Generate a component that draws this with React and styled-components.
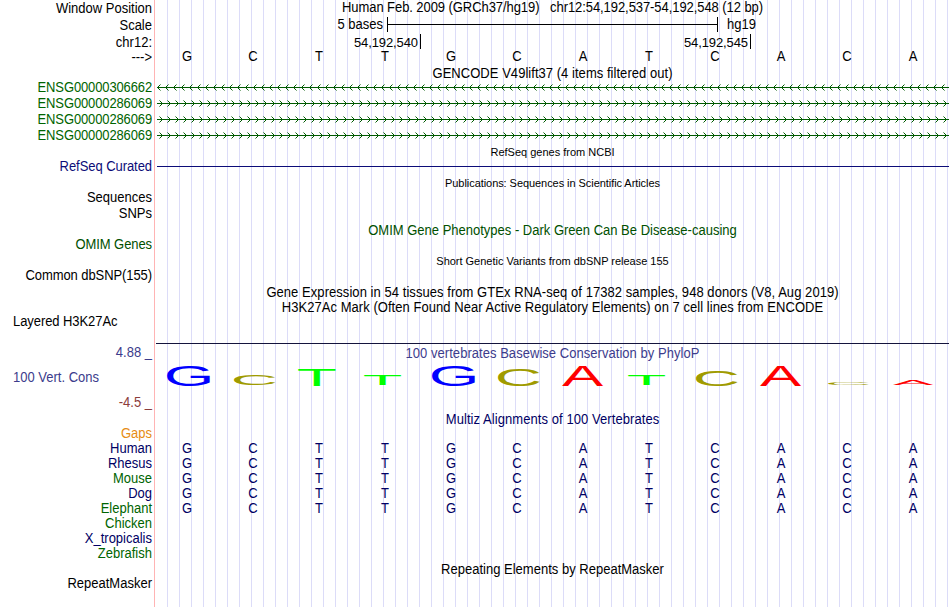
import React from "react";
import styled, { createGlobalStyle, css } from "styled-components";

const Page = createGlobalStyle`
  body { margin: 0; background: #fff; }
`;

const Browser = styled.main`
  box-sizing: border-box;
  width: 949px;
  height: 607px;
  padding-top: 1px;
  overflow: hidden;
  font: 13px/16px "Liberation Sans", Arial, sans-serif;
  color: #000;
  white-space: pre;
  background:
    linear-gradient(#ffb4b4, #ffb4b4) 154px 0 / 1px 100% no-repeat,
    repeating-linear-gradient(90deg, #dcdcf8 0 1px, transparent 1px 12px) 167px 0 / 782px 100% no-repeat;
`;

// slightly tall lettering
const tall = css`
  transform: scaleY(1.07);
  transform-origin: 0 6px;
`;

const Row = styled.div`
  display: flex;
  height: ${(p) => p.$h}px;
`;

const Label = styled.div`
  flex: none;
  box-sizing: border-box;
  width: 154px;
  height: 16px;
  margin-top: ${(p) => p.$top || 0}px;
  padding: 0 2px 0 13px;
  text-align: ${(p) => (p.$left ? "left" : "right")};
  color: ${(p) => p.$color || "#000"};
  letter-spacing: ${(p) => p.$ls || 0}px;
  ${tall}
`;

const Title = styled.div`
  flex: 1;
  height: 16px;
  margin: ${(p) => p.$top || 0}px 0 0 2px;
  text-align: center;
  font-size: ${(p) => (p.$small ? 11 : 13)}px;
  color: ${(p) => p.$color || "#000"};
  letter-spacing: ${(p) => p.$ls || 0}px;
  ${(p) => !p.$small && tall}
`;

const Cells = styled.div`
  display: grid;
  grid-template-columns: repeat(12, 66px);
  height: 16px;
  text-align: center;
  color: ${(p) => p.$color || "#000"};
  ${tall}
`;

const Line = styled.div`
  width: ${(p) => p.$w}px;
  height: 1px;
  margin: ${(p) => p.$top}px 0 ${(p) => p.$bottom || 0}px ${(p) => p.$left}px;
  background: ${(p) => p.$color};
`;

const ScaleBar = styled.div`
  display: flex;
  justify-content: flex-end;
  width: 602px;
  height: 16px;
  margin-top: -1px;
`;

const Ruler = styled.div`
  flex: none;
  width: 329px;
  height: 15px;
  margin: 0 9px 0 4px;
  border: solid #000;
  border-width: 0 1px;
  background: linear-gradient(#000, #000) 0 7px / 100% 1px no-repeat;
`;

const Unit = styled.div`
  width: 29px;
  ${tall}
`;

const Bar = styled.div`
  ${tall}
`;

const Ticks = styled.div`
  display: flex;
  margin-top: -1px;
  line-height: 18px;
`;

const Tick = styled.div`
  box-sizing: border-box;
  width: ${(p) => p.$w}px;
  height: 15px;
  padding-right: 2px;
  text-align: right;
  letter-spacing: -0.1px;
  border-right: 1px solid #000;
`;

const Strand = styled.svg`
  display: block;
  width: 792px;
  height: 7px;
  margin: 4px 0 0 3px;
`;

const Logo = styled.div`
  display: grid;
  grid-template-columns: repeat(12, 66px);
  align-items: end;
  height: 22px;
  margin: -18px 0 0 154px;
`;

const Glyph = styled.svg`
  display: block;
  width: ${(p) => p.$w}px;
  height: ${(p) => p.$h}px;
  margin-left: ${(p) => p.$x}px;
  margin-bottom: ${(p) => p.$b}px;
  overflow: visible;
`;

const glyphs = {
  G: { box: "103 -1430 1363 1450", color: "#0000ff" },
  C: { box: "102 -1430 1284 1450", color: "#a09b00" },
  T: { box: "42 -1409 1166 1409", color: "#00ff00" },
  A: { box: "3 -1409 1359 1409", color: "#ff0000" },
};

// letter, offset in its cell, width, height, gap under it
const logo = [
  ["G", 13, 43.4, 21, 0], ["C", 14, 41, 10, 1], ["T", 12, 37.5, 17, 0], ["T", 12.3, 37, 10, 1],
  ["G", 13.7, 43.4, 21, 0], ["C", 14, 41, 17, 0], ["A", 12.3, 41, 20, 0], ["T", 12.3, 37, 10, 1],
  ["C", 14, 41, 16, 0], ["A", 12.3, 41, 20, 0], ["C", 14, 40.5, 3, 1], ["A", 13, 40, 5, 1],
];

const Arrows = ({ id, left }) => (
  <Strand viewBox="0 0 792 7">
    <defs>
      <pattern id={id} width="8" height="7" patternUnits="userSpaceOnUse">
        <path
          d={left ? "M3.5 0.5L0.5 3.5L3.5 6.5" : "M2.5 0.5L5.5 3.5L2.5 6.5"}
          fill="none" stroke="#005a00" strokeWidth="1"
        />
      </pattern>
    </defs>
    <rect width="792" height="7" fill={`url(#${id})`} />
    <rect y="3" width="792" height="1" fill="#005a00" />
  </Strand>
);

const Bases = ({ color }) => (
  <Cells $color={color}>
    {[..."GCTTGCATCACA"].map((b, i) => <span key={i}>{b}</span>)}
  </Cells>
);

const Heading = ({ h, text, ...rest }) => (
  <Row $h={h}><Label /><Title {...rest}>{text}</Title></Row>
);

const navy = "#000064";
const green = "#006400";

const species = [
  ["Human", navy, true], ["Rhesus", navy, true], ["Mouse", green, true], ["Dog", navy, true],
  ["Elephant", green, true], ["Chicken", green], ["X_tropicalis", navy], ["Zebrafish", green],
];

export default function App() {
  return (
    <>
      <Page />
      <Browser>
        <Row $h={17}>
          <Label>Window Position</Label>
          <Title $top={-1} $ls={-0.07}>{"Human Feb. 2009 (GRCh37/hg19)   chr12:54,192,537-54,192,548 (12 bp)"}</Title>
        </Row>
        <Row $h={17}>
          <Label>Scale</Label>
          <ScaleBar><Bar>5 bases</Bar><Ruler /><Unit>hg19</Unit></ScaleBar>
        </Row>
        <Row $h={14}>
          <Label>chr12:</Label>
          <Ticks><Tick $w={267}>54,192,540</Tick><Tick $w={330}>54,192,545</Tick></Ticks>
        </Row>
        <Row $h={17}><Label $top={1}>---&gt;</Label><Bases /></Row>
        <Heading h={14} $ls={0.04} text="GENCODE V49lift37 (4 items filtered out)" />
        {["306662", "286069", "286069", "286069"].map((n, i) => (
          <Row key={i} $h={16}>
            <Label $color={green} $ls={-0.13}>ENSG00000{n}</Label>
            <Arrows id={`strand${i}`} left={i === 0} />
          </Row>
        ))}
        <Heading h={15} $small text="RefSeq genes from NCBI" />
        <Row $h={16}>
          <Label $color="#0c0c78" $ls={-0.06}>RefSeq Curated</Label>
          <Line $w={792} $top={7} $left={3} $color="#0c0c78" />
        </Row>
        <Heading h={15} $small $ls={-0.06} text="Publications: Sequences in Scientific Articles" />
        <Row $h={16}><Label>Sequences</Label></Row>
        <Row $h={17}><Label>SNPs</Label></Row>
        <Heading h={14} $color="#005000" text="OMIM Gene Phenotypes - Dark Green Can Be Disease-causing" />
        <Row $h={16}><Label $color="#005000" $ls={-0.08}>OMIM Genes</Label></Row>
        <Heading h={15} $small $ls={-0.02} text="Short Genetic Variants from dbSNP release 155" />
        <Row $h={17}><Label $ls={-0.08}>Common dbSNP(155)</Label></Row>
        <Heading h={15} $ls={0.055} text="Gene Expression in 54 tissues from GTEx RNA-seq of 17382 samples, 948 donors (V8, Aug 2019)" />
        <Heading h={14} $ls={0.045} text="H3K27Ac Mark (Often Found Near Active Regulatory Elements) on 7 cell lines from ENCODE" />
        <Row $h={29}><Label $left $ls={-0.07}>Layered H3K27Ac</Label></Row>
        <Line $w={793} $top={0} $bottom={1} $left={156} $color="#14143c" />
        <Row $h={25}>
          <Label $color="#3c3c8c">4.88 _</Label>
          <Title $top={1} $ls={0.04} $color="#3c3c8c">100 vertebrates Basewise Conservation by PhyloP</Title>
        </Row>
        <Row $h={12}><Label $left $color="#3c3c8c">100 Vert. Cons</Label></Row>
        <Logo>
          {logo.map(([c, x, w, h, b], i) => (
            <Glyph key={i} $x={x} $w={w} $h={h} $b={b} viewBox={glyphs[c].box} preserveAspectRatio="none">
              <text fontSize="2048" fill={glyphs[c].color}>{c}</text>
            </Glyph>
          ))}
        </Logo>
        <Row $h={9} />
        <Row $h={17}><Label $color="#8c3c3c">-4.5 _</Label></Row>
        <Heading h={14} $ls={0.07} $color={navy} text="Multiz Alignments of 100 Vertebrates" />
        <Row $h={15}><Label $color="#e68c14">Gaps</Label></Row>
        {species.map(([name, color, aligned]) => (
          <Row key={name} $h={15}>
            <Label $color={color}>{name}</Label>
            {aligned && <Bases color={navy} />}
          </Row>
        ))}
        <Heading h={15} $top={1} $ls={0.01} text="Repeating Elements by RepeatMasker" />
        <Row $h={16}><Label>RepeatMasker</Label></Row>
      </Browser>
    </>
  );
}
